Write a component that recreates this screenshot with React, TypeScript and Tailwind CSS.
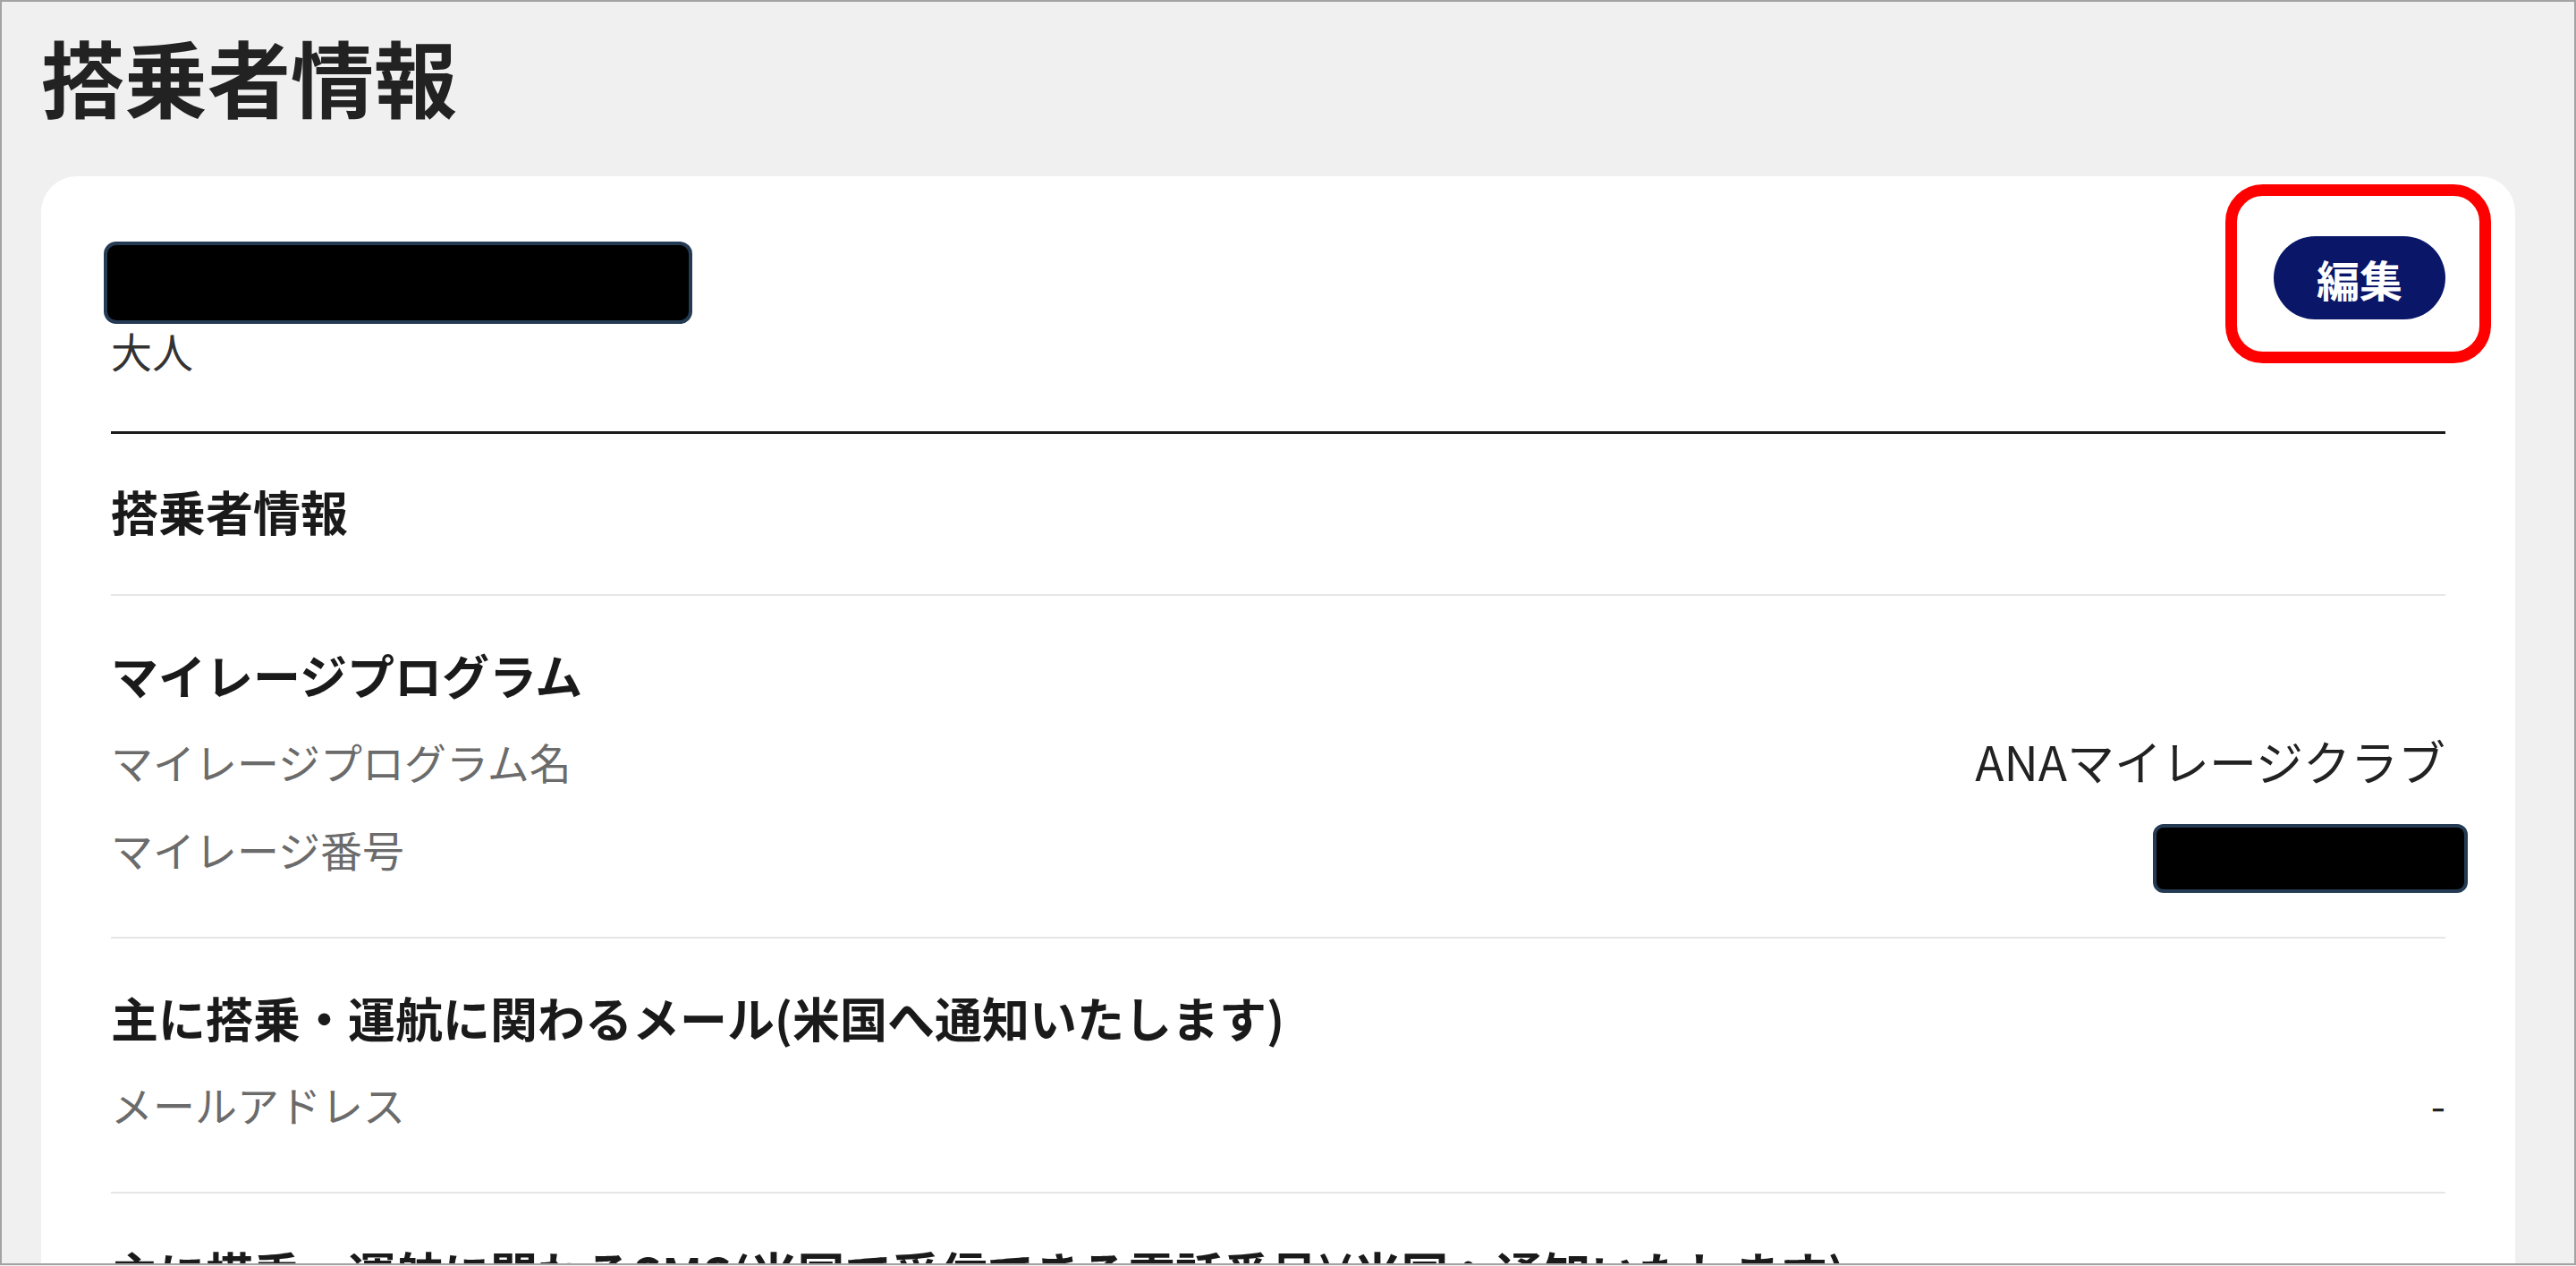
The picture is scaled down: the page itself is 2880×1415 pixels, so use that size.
import React from 'react';

const font = { fontFamily: '"Noto Sans CJK JP", "Noto Sans", sans-serif' };

function Redacted({ className }: { className: string }) {
  return <div className={`bg-black border-[4px] border-[#243b53] ${className}`} />;
}

function Row({ label, children }: { label: string; children: React.ReactNode }) {
  return (
    <div className="flex h-[98px] items-center justify-between">
      <span className="text-[47px] text-[#6b6b6b]">{label}</span>
      {children}
    </div>
  );
}

function Section({ title, children, last }: { title: string; children?: React.ReactNode; last?: boolean }) {
  return (
    <div className={`pt-[51px] ${last ? '' : 'pb-[49px] border-b-2 border-[#e6e6e6]'}`}>
      <h3 className="text-[53px] font-bold leading-[74px] text-[#1a1a1a] whitespace-nowrap">{title}</h3>
      {children && <div className="mt-[11px]">{children}</div>}
    </div>
  );
}

export default function App() {
  return (
    <div style={font} className="w-[2880px] h-[1415px] overflow-hidden bg-[#f0f0f0]">
      <div className="h-[1414px] border-2 border-[#a3a3a3] pl-[44px] pr-[66px] overflow-hidden">
        <h1 className="pt-[36px] text-[93px] font-bold leading-none text-[#222]">搭乗者情報</h1>

        <div className="relative mt-[66px] rounded-[40px] bg-white px-[78px] pt-[67px]">
          {/* header */}
          <div className="flex items-start justify-between">
            <div className="pt-[6px]">
              <Redacted className="ml-[-8px] h-[92px] w-[658px] rounded-[14px]" />
              <div className="text-[46px] leading-[55px] text-[#333] mt-[2px]">大人</div>
            </div>
            <button className="h-[93px] w-[192px] rounded-full bg-[#0a1668] text-[48px] font-bold text-white">
              編集
            </button>
          </div>

          {/* highlight */}
          <div className="absolute left-[2442px] top-[9px] h-[200px] w-[297px] rounded-[42px] border-[13px] border-[#ff0000]" />

          <div className="mt-[63px] h-[3px] bg-[#1a1a1a]" />

          <div>
            <div className="pt-[49px] pb-[56px] border-b-2 border-[#e6e6e6]">
              <h3 className="text-[53px] font-bold leading-[74px] text-[#1a1a1a]">搭乗者情報</h3>
            </div>

            <Section title="マイレージプログラム">
              <Row label="マイレージプログラム名">
                <span className="text-[53px] text-[#222]">ANAマイレージクラブ</span>
              </Row>
              <Row label="マイレージ番号">
                <Redacted className="mr-[-25px] mt-[20px] h-[77px] w-[352px] rounded-[12px]" />
              </Row>
            </Section>

            <Section title="主に搭乗・運航に関わるメール(米国へ通知いたします)">
              <Row label="メールアドレス">
                <span className="text-[47px] text-[#222]">-</span>
              </Row>
            </Section>

            <Section title="主に搭乗・運航に関わるSMS(米国で受信できる電話番号)(米国へ通知いたします)" last>
              <Row label="電話番号">
                <span className="text-[47px] text-[#222]">-</span>
              </Row>
            </Section>
          </div>
        </div>
      </div>
    </div>
  );
}
